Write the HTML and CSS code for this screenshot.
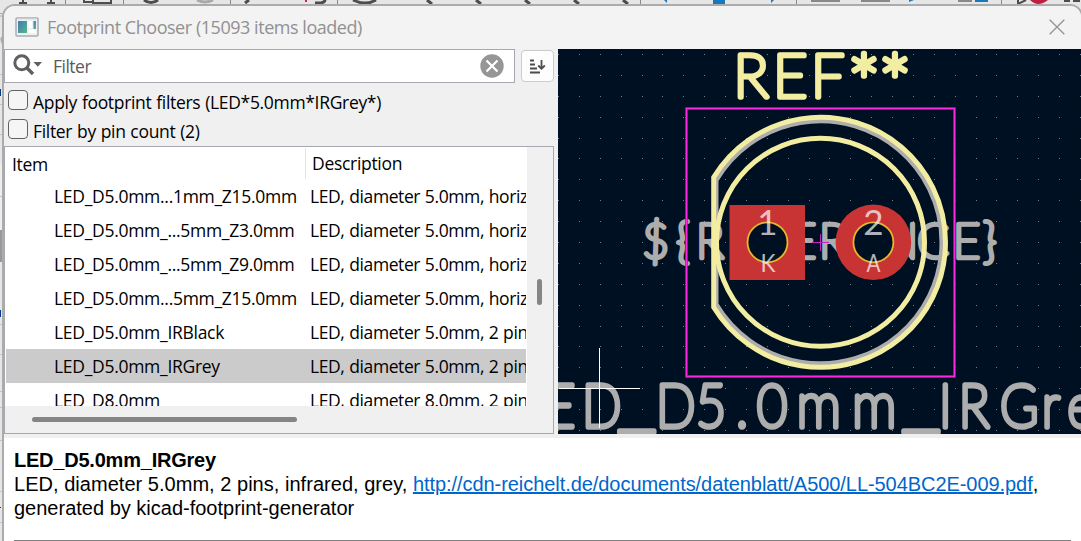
FILE: index.html
```html
<!DOCTYPE html>
<html lang="en">
<head>
<meta charset="utf-8">
<title>Footprint Chooser</title>
<link rel="stylesheet" href="styles.css">
</head>
<body>
<svg class="backdrop" width="1081" height="541" aria-hidden="true">
  <rect width="1081" height="541" fill="#e6e6e6"/>
  <path d="M0 13.500H8M0 16H6" stroke="#aaa"/>
  <path d="M0 164H4V230H0Z" fill="#eee"/>
  <path d="M0 230H4V262H0Z" fill="#999"/>
  <path d="M0 74.500H4M0 104.500H4M0 134.500H4M0 196.500H4M0 324.500H4M0 354.500H4M0 391.500H4M0 407.500H4M0 440.500H4M0 491.500H4M0 522.500H4" stroke="#c4c4c4"/>
  <path d="M0 89h1v7H0zM0 310h1v7H0zM0 507h1v1H0z" fill="#003a8c"/>
  <path d="M2 37Q0 40 3 44" stroke="#aaa" stroke-width="1.500" fill="none"/>
  <g stroke="#4d4d4d" fill="none" stroke-width="2">
    <path d="M23 0V3M19 3H27M51 0V3M47 3H55"/>
    <path d="M84 0V2H94M93 0V3H111V0"/>
    <path d="M144 0Q151 5 158 0" stroke-width="3"/>
    <path d="M197 0Q205 4 213 0" stroke="#aaa" stroke-width="3"/>
    <path d="M249 0L245 3" stroke-width="3"/>
    <path d="M315 3H321Q325 2 325 0" stroke-width="3"/>
    <path d="M353 0Q359 3 365 3Q371 3 376 0M427 0L432 4M476 0L481 4M525 0L530 4M574 0L579 4M623 0L628 4" stroke-width="3"/>
    <path d="M65.500 0V6M123.500 0V6M230.500 0V6M337.500 0V6M640.500 0V6M796.500 0V6M1001.500 0V6" stroke="#888" stroke-width="1"/>
    <path d="M811 1H840M861 1H890M958 1H972"  stroke="#888"/>
    <path d="M1018 0V4L1026 0M1064 1H1070M1073 1H1080"/>
  </g>
  <path d="M664 0H667V3ZM713 0H725V4H713ZM771 0H774L771 3ZM909 0H914L909 2ZM975 0H988V2H975Z" fill="#1a78bd"/>
  <path d="M305 0h2v2h-2z" fill="#d0213f"/>
  <path d="M1030 0Q1038 8 1048 0Z" fill="#c0203f"/>
</svg>
<main class="window">
  <header class="titlebar">
    <svg class="app-icon" width="24" height="20" viewBox="0 0 24 20">
      <defs><linearGradient id="app" x2="1" y2="1"><stop stop-color="#4279b8"/><stop offset="1" stop-color="#55b884"/></linearGradient></defs>
      <rect x="1" y="1" width="22" height="18" rx="1" fill="#eef0f2" stroke="#a7aeb4" stroke-width="1.500"/>
      <path d="M2 2H22" stroke="#d5dde4"/>
      <rect x="3" y="4" width="9" height="12" fill="url(#app)"/>
      <path d="M13.500 4H17V11H13.500ZM13.500 12.500H21V16H13.500Z" fill="#fff"/>
      <rect x="18.500" y="4" width="2.500" height="8" fill="url(#app)"/>
    </svg>
    <h1 class="title">Footprint Chooser (15093 items loaded)</h1>
    <svg class="close" width="16" height="16" viewBox="0 0 16 16"><path d="M.7.700L15.300 15.300M15.300.700L.7 15.300" stroke="#929292" stroke-width="1.300"/></svg>
  </header>
  <div class="content">
    <section class="chooser">
      <div class="search-row">
        <div class="search">
          <svg class="lens" width="30" height="22" viewBox="0 0 30 22"><circle cx="8.800" cy="8.800" r="7" fill="none" stroke="#606060" stroke-width="3"/><path d="M13.500 13.500L20 20" stroke="#606060" stroke-width="3.400"/><path d="M20.500 8H29L24.800 12.700Z" fill="#606060"/></svg>
          <span class="placeholder">Filter</span>
          <svg class="clear" width="24" height="24" viewBox="0 0 24 24"><circle cx="12" cy="12" r="11.700" fill="#969696"/><path d="M6.500 6.500L17.500 17.500M17.500 6.500L6.500 17.500" stroke="#fff" stroke-width="2.200"/></svg>
        </div>
        <div class="sort"><svg width="17" height="15" viewBox="0 0 17 15"><path d="M1 1.500H5M1 5.500H6M1 9.500H8M1 13.500H11" stroke="#4c4c4c" stroke-width="2"/><path d="M12.500 1V10M9.200 6.500L12.500 9.800L15.800 6.500" fill="none" stroke="#4c4c4c" stroke-width="1.800"/></svg></div>
      </div>
      <div class="checks">
        <div class="check"><span class="box"></span><span class="label">Apply footprint filters (LED*5.0mm*IRGrey*)</span></div>
        <div class="check"><span class="box"></span><span class="label">Filter by pin count (2)</span></div>
      </div>
      <div class="list">
        <div class="table">
          <div class="row head"><span class="name">Item</span><span class="desc">Description</span></div>
          <div class="row"><span class="name">LED_D5.0mm...1mm_Z15.0mm</span><span class="desc">LED, diameter 5.0mm, horiz</span></div>
          <div class="row"><span class="name">LED_D5.0mm_...5mm_Z3.0mm</span><span class="desc">LED, diameter 5.0mm, horiz</span></div>
          <div class="row"><span class="name">LED_D5.0mm_...5mm_Z9.0mm</span><span class="desc">LED, diameter 5.0mm, horiz</span></div>
          <div class="row"><span class="name">LED_D5.0mm...5mm_Z15.0mm</span><span class="desc">LED, diameter 5.0mm, horiz</span></div>
          <div class="row"><span class="name">LED_D5.0mm_IRBlack</span><span class="desc">LED, diameter 5.0mm, 2 pins</span></div>
          <div class="row selected"><span class="name">LED_D5.0mm_IRGrey</span><span class="desc">LED, diameter 5.0mm, 2 pins</span></div>
          <div class="row"><span class="name">LED_D8.0mm</span><span class="desc">LED, diameter 8.0mm, 2 pins</span></div>
        </div>
        <div class="vscroll"><div class="vthumb"></div></div>
        <div class="hscroll"><div class="hthumb"></div></div>
      </div>
    </section>
    <svg class="board" width="523" height="385" viewBox="558 49 523 385">
      <rect x="558" y="49" width="523" height="385" fill="#001023"/>
      <path class="grid" d="M495 54.500H1081M495 75.500H1081M495 96.500H1081M495 117.500H1081M495 138.500H1081M495 158.500H1081M495 179.500H1081M495 200.500H1081M495 221.500H1081M495 242.500H1081M495 263.500H1081M495 284.500H1081M495 305.500H1081M495 326.500H1081M495 346.500H1081M495 367.500H1081M495 388.500H1081M495 409.500H1081M495 430.500H1081"/>
      <text class="stroke-text fab ref" y="257.500" x="642 676 696 729 760 789 819 853 883 917 953 983">${REFERENCE}</text>
      <text class="stroke-text fab value" transform="scale(.88 1)" y="427" x="585 619.300 661.400">LED<tspan class="bar" x="701.500" y="419">_</tspan><tspan x="745.500 790.900 836.400 860.200" y="427">D5.0</tspan><tspan class="wide" x="905.200 968.300">mm</tspan><tspan class="bar" x="1024.300" y="419">_</tspan><tspan x="1067 1089.500 1136.500 1184 1213 1250" y="427">IRGrey</tspan></text>
      <path d="M716 180.300A121.500 121.500 0 1 1 716 304.300Z" fill="none" stroke="#adadad" stroke-width="5"/>
      <text class="stroke-text silk" y="96.500" x="733.500 773 811">REF<tspan class="stars" x="847 878" y="113">**</tspan></text>
      <g fill="none" stroke="#f2eda1">
        <path d="M713.700 177.300A125 125 0 1 1 713.700 307.300Z" stroke-width="5"/>
        <circle cx="820.500" cy="242.300" r="104" stroke-width="5"/>
      </g>
      <rect x="729.500" y="205" width="75.500" height="75" fill="#c83434"/>
      <circle cx="873.400" cy="242.300" r="37.800" fill="#c83434"/>
      <g fill="#001023" stroke="#e3b72e" stroke-width="1.800"><circle cx="767.500" cy="242.300" r="20"/><circle cx="873.400" cy="242.300" r="20"/></g>
      <g class="pad-text">
        <text x="767.500" y="235" font-size="35">1</text><text x="873.500" y="235" font-size="35">2</text>
        <text x="768" y="272" font-size="25" textLength="15" lengthAdjust="spacingAndGlyphs">K</text><text x="873.500" y="272" font-size="25" textLength="14" lengthAdjust="spacingAndGlyphs">A</text>
      </g>
      <rect x="686.500" y="108.500" width="268" height="268" fill="none" stroke="#90189b" stroke-width="2.600"/>
      <rect x="686.500" y="108.500" width="268" height="268" fill="none" stroke="#ff26e2" stroke-width="1.400"/>
      <path d="M812 242.500H829M820.500 234V251" stroke="#c41fc0"/>
      <path d="M559 388.500H640M599.500 348V428" stroke="#fff"/>
    </svg>
  </div>
  <section class="details">
    <h2>LED_D5.0mm_IRGrey</h2>
    <p><span class="summary">LED, diameter 5.0mm, 2 pins, infrared, grey, </span><a>http://cdn-reichelt.de/documents/datenblatt/A500/LL-504BC2E-009.pdf</a>,<br>generated by kicad-footprint-generator</p>
    <hr>
  </section>
</main>
</body>
</html>
```
FILE: styles.css
```css
* { box-sizing: border-box; }
body { margin: 0; width: 1081px; height: 541px; overflow: hidden; position: relative; font-family: "Open Sans", "Noto Sans", sans-serif; font-size: 17.5px; color: #000; }
.backdrop { position: absolute; left: 0; top: 0; }
.window { position: relative; margin: 6px 0 0 4px; width: 1077px; height: 535px; background: #f0f0f0; border-radius: 11px 11px 0 0; box-shadow: 0 0 0 2px #ababab; overflow: hidden; }
.titlebar { height: 43px; display: flex; align-items: center; background: #f3f3f3; padding: 0 16px 0 11px; }
.app-icon { margin-top: -2px; }
.title { margin: -2px auto 0 8px; font-weight: 400; font-size: 18px; letter-spacing: -.46px; color: #919191; white-space: nowrap; }
.close { margin-top: -2px; }
.content { display: flex; height: 385px; }
.chooser { width: 554px; display: flex; flex-direction: column; }
.search-row { display: flex; height: 34px; gap: 6px; align-items: center; }
.search { width: 511px; height: 34px; background: #fff; border: 1px solid #a8a8b0; display: flex; align-items: center; padding: 0 10px 0 8px; }
.lens { margin-top: -3px; }
.placeholder { margin: 0 auto 0 10px; color: #5a5a5a; letter-spacing: -.5px; }
.clear { margin-top: -1px; }
.sort { width: 33px; height: 32px; border: 1px solid #ccc; border-radius: 4px; background: #fdfdfd; display: flex; align-items: center; justify-content: center; }
.checks { height: 63px; padding: 3px 4px; }
.check { display: flex; align-items: center; height: 29px; gap: 5px; white-space: nowrap; }
.box { width: 20px; height: 20px; border: 1px solid #626262; border-radius: 4px; background: #f5f5f5; margin-top: -1px; }
.label { letter-spacing: -.32px; word-spacing: .6px; padding-top: 2px; }
.list { width: 550px; height: 288px; border: 1px solid #a8a8b0; background: #f0f0f0; display: grid; grid-template-columns: 522px 26px; grid-template-rows: 259px 27px; }
.table { background: #fff; overflow: hidden; padding-left: 1px; }
.row { height: 34px; display: flex; align-items: center; white-space: nowrap; }
.row .name { width: 300px; padding-left: 48px; letter-spacing: -.29px; flex: none; }
.row .desc { width: 220px; padding-left: 4px; overflow: hidden; letter-spacing: -.4px; word-spacing: .6px; flex: none; }
.row.head { height: 32px; padding-top: 1px; }
.row.head .name { padding-left: 6px; border-right: 1px solid #e2e2e2; height: 31px; line-height: 32px; }
.row.head .desc { padding-left: 6px; line-height: 33px; letter-spacing: -.3px; }
.row.selected { background: #cbcbcb; width: 520px; }
.vscroll { padding: 132px 0 0 10px; }
.vthumb { width: 5px; height: 26px; border-radius: 3px; background: #858585; }
.hscroll { padding: 11px 0 0 27px; }
.hthumb { width: 265px; height: 5px; border-radius: 3px; background: #858585; }
.board { display: block; flex: none; }
.grid { fill: none; stroke: #77808a; stroke-width: 1; stroke-dasharray: 1 20 1 20 1 20 1 20 1 20 1 20 1 20 1 19; shape-rendering: crispEdges; }
.stroke-text { font-family: Lato, sans-serif; font-weight: 100; stroke-linejoin: round; stroke-linecap: round; }
.fab { fill: #adadad; stroke: #adadad; }
.ref { font-size: 47px; stroke-width: 4.6px; }
.value { font-size: 59px; stroke-width: 5.6px; }
.bar { font-size: 100px; }
.wide { font-size: 64px; }
.silk { font-size: 59px; fill: #f2eda1; stroke: #f2eda1; stroke-width: 5.4px; }
.stars { font-size: 80px; }
.pad-text { font-family: Lato, sans-serif; fill: #fff; fill-opacity: .7; text-anchor: middle; }
.details { margin-top: 4px; height: 103px; background: #fff; padding: 10px 10px 0; font: 20px/24px "Liberation Sans", Arial, sans-serif; white-space: nowrap; }
.details h2 { font-size: 20px; margin: 0; line-height: 24px; letter-spacing: -.22px; }
.details p { margin: 0; }
.summary { letter-spacing: .03px; }
.details a { color: #0066cc; text-decoration: underline; letter-spacing: -.06px; }
.details hr { border: 0; height: 1px; background: #808080; margin: 20px 0 0; }
```
